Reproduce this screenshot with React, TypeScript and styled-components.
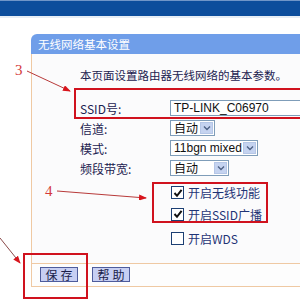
import { Fragment } from "react";
import styled, { createGlobalStyle } from "styled-components";

const GlobalStyle = createGlobalStyle`
  html, body {
    margin: 0;
    padding: 0;
    background: #ffffff;
  }
  body {
    font-family: "Noto Sans CJK SC", "Liberation Sans", sans-serif;
    font-size: 12px;
  }
`;

const Page = styled.div`
  position: relative;
  width: 300px;
  height: 300px;
  overflow: hidden;
  background: #ffffff;
`;

const TopBar = styled.div`
  height: 15px;
  border-top: 1px solid #6f95c8;
  background: #0c4d9c;
  border-bottom: 2px solid #e6edf5;
`;

const Panel = styled.div`
  margin: 16px 0 0 31px;
  width: 300px;
`;

const PanelHeader = styled.div`
  height: 20px;
  background: #6f9ee9;
  border-top-left-radius: 6px;
  color: #ffffff;
  font-size: 11.5px;
  line-height: 20px;
  padding-left: 7px;
`;

const PanelBody = styled.div`
  height: 209px;
  box-sizing: border-box;
  border-left: 1px solid #efc9a3;
  background: #fbfbfc;
  padding: 14px 0 0 48px;
`;

const Intro = styled.div`
  color: #1c2250;
  font-size: 11.5px;
  line-height: 14px;
  white-space: nowrap;
`;

const Form = styled.div`
  margin-top: 16px;
  display: grid;
  grid-template-columns: 90px 1fr;
  grid-auto-rows: 20px;
  align-items: center;
`;

const Label = styled.div`
  color: #1c2250;
  font-size: 12px;
  white-space: nowrap;
`;

const TextInput = styled.div`
  height: 14px;
  border: 1px solid #7f9db9;
  background: #ffffff;
  font-family: "Liberation Sans", Arial, sans-serif;
  font-size: 12px;
  line-height: 14px;
  padding-left: 3px;
  color: #111111;
  white-space: nowrap;
`;

const Select = styled.div<{ $w: number }>`
  width: ${(p) => p.$w}px;
  height: 14px;
  box-sizing: content-box;
  border: 1px solid #7f9db9;
  background: #ffffff;
  display: flex;
  align-items: center;
`;

const SelectText = styled.span<{ $latin?: boolean }>`
  flex: 1;
  padding-left: 3px;
  font-family: ${(p) =>
    p.$latin ? `"Liberation Sans", Arial, sans-serif` : `"Noto Sans CJK SC", sans-serif`};
  font-size: 12px;
  line-height: 14px;
  color: #111111;
  white-space: nowrap;
`;

const SelectButton = styled.span`
  width: 13px;
  height: 12px;
  margin-right: 1px;
  background: #c5d3f0;
  border: 1px solid #b5c6e6;
  box-sizing: border-box;
  display: flex;
  align-items: center;
  justify-content: center;
`;

const Checks = styled.div`
  margin: 4px 0 0 91px;
  display: flex;
  flex-direction: column;
`;

const CheckRow = styled.div<{ $h: number }>`
  height: ${(p) => p.$h}px;
  display: flex;
  align-items: center;
  gap: 4px;
  color: #1f3476;
  font-size: 12px;
  white-space: nowrap;
`;

const Box = styled.span`
  width: 11px;
  height: 11px;
  border: 1px solid #1c3f73;
  background: #ffffff;
  display: flex;
  align-items: center;
  justify-content: center;
`;

const Footer = styled.div`
  height: 24px;
  box-sizing: border-box;
  border-top: 1px solid #efc9a3;
  border-bottom: 1px solid #efc9a3;
  border-left: 1px solid #efc9a3;
  background: #fdfdfd;
  display: flex;
  gap: 14px;
  padding: 3px 0 0 8px;
`;

const Button = styled.div`
  width: 38px;
  height: 15px;
  box-sizing: border-box;
  border: 1px solid #4e5c9c;
  background: #c7cff3;
  color: #1a1d4a;
  font-size: 12px;
  line-height: 13px;
  text-align: center;
  letter-spacing: 3px;
  text-indent: 3px;
`;

const Mark = styled.div<{ $x: number; $y: number; $w: number; $h: number }>`
  position: absolute;
  left: ${(p) => p.$x}px;
  top: ${(p) => p.$y}px;
  width: ${(p) => p.$w}px;
  height: ${(p) => p.$h}px;
  box-sizing: border-box;
  border: 2px solid #d0121e;
`;

const StepNo = styled.div<{ $x: number; $y: number }>`
  position: absolute;
  left: ${(p) => p.$x}px;
  top: ${(p) => p.$y}px;
  color: #d43a3a;
  font-family: "Liberation Serif", serif;
  font-size: 15px;
  line-height: 15px;
`;

const Arrows = styled.svg`
  position: absolute;
  left: 0;
  top: 0;
  pointer-events: none;
`;

const Chevron = () => (
  <svg width="8" height="6" viewBox="0 0 8 6">
    <path d="M1 1.5 L4 4.5 L7 1.5" fill="none" stroke="#4d6185" strokeWidth="1.4" />
  </svg>
);

const Tick = () => (
  <svg width="10" height="10" viewBox="0 0 10 10">
    <path d="M1.5 5 L4 7.8 L8.6 1.8" fill="none" stroke="#111" strokeWidth="2" />
  </svg>
);

const fields = [
  { label: "信道:", text: "自动", w: 43 },
  { label: "模式:", text: "11bgn mixed", w: 86, latin: true },
  { label: "频段带宽:", text: "自动", w: 57 },
];

const checks = [
  { text: "开启无线功能", on: true, h: 21 },
  { text: "开启SSID广播", on: true, h: 22 },
  { text: "开启WDS", on: false, h: 26 },
];

export default function App() {
  return (
    <Page>
      <GlobalStyle />
      <TopBar />
      <Panel>
        <PanelHeader>无线网络基本设置</PanelHeader>
        <PanelBody>
          <Intro>本页面设置路由器无线网络的基本参数。</Intro>
          <Form>
            <Label>SSID号:</Label>
            <TextInput>TP-LINK_C06970</TextInput>
            {fields.map((f) => (
              <Fragment key={f.label}>
                <Label>{f.label}</Label>
                <Select $w={f.w}>
                  <SelectText $latin={f.latin}>{f.text}</SelectText>
                  <SelectButton>
                    <Chevron />
                  </SelectButton>
                </Select>
              </Fragment>
            ))}
          </Form>
          <Checks>
            {checks.map((c) => (
              <CheckRow key={c.text} $h={c.h}>
                <Box>{c.on && <Tick />}</Box>
                {c.text}
              </CheckRow>
            ))}
          </Checks>
        </PanelBody>
        <Footer>
          <Button>保存</Button>
          <Button>帮助</Button>
        </Footer>
      </Panel>

      <StepNo $x={15} $y={63}>3</StepNo>
      <StepNo $x={45} $y={184}>4</StepNo>
      <Mark $x={74} $y={88} $w={240} $h={31} />
      <Mark $x={152} $y={182} $w={116} $h={41} />
      <Mark $x={23} $y={253} $w={65} $h={46} />
      <Arrows width="300" height="300" viewBox="0 0 300 300">
        <defs>
          <marker id="head" markerWidth="8" markerHeight="6" refX="7" refY="3" orient="auto">
            <path d="M0 0 L8 3 L0 6 Z" fill="#d8141c" />
          </marker>
        </defs>
        <line x1="27" y1="71" x2="70" y2="91" stroke="#b83a3a" strokeWidth="1" markerEnd="url(#head)" />
        <line x1="57" y1="191" x2="146" y2="198" stroke="#b83a3a" strokeWidth="1" markerEnd="url(#head)" />
        <line x1="0" y1="238" x2="20" y2="263" stroke="#8a4a4a" strokeWidth="1" markerEnd="url(#head)" />
      </Arrows>
    </Page>
  );
}
